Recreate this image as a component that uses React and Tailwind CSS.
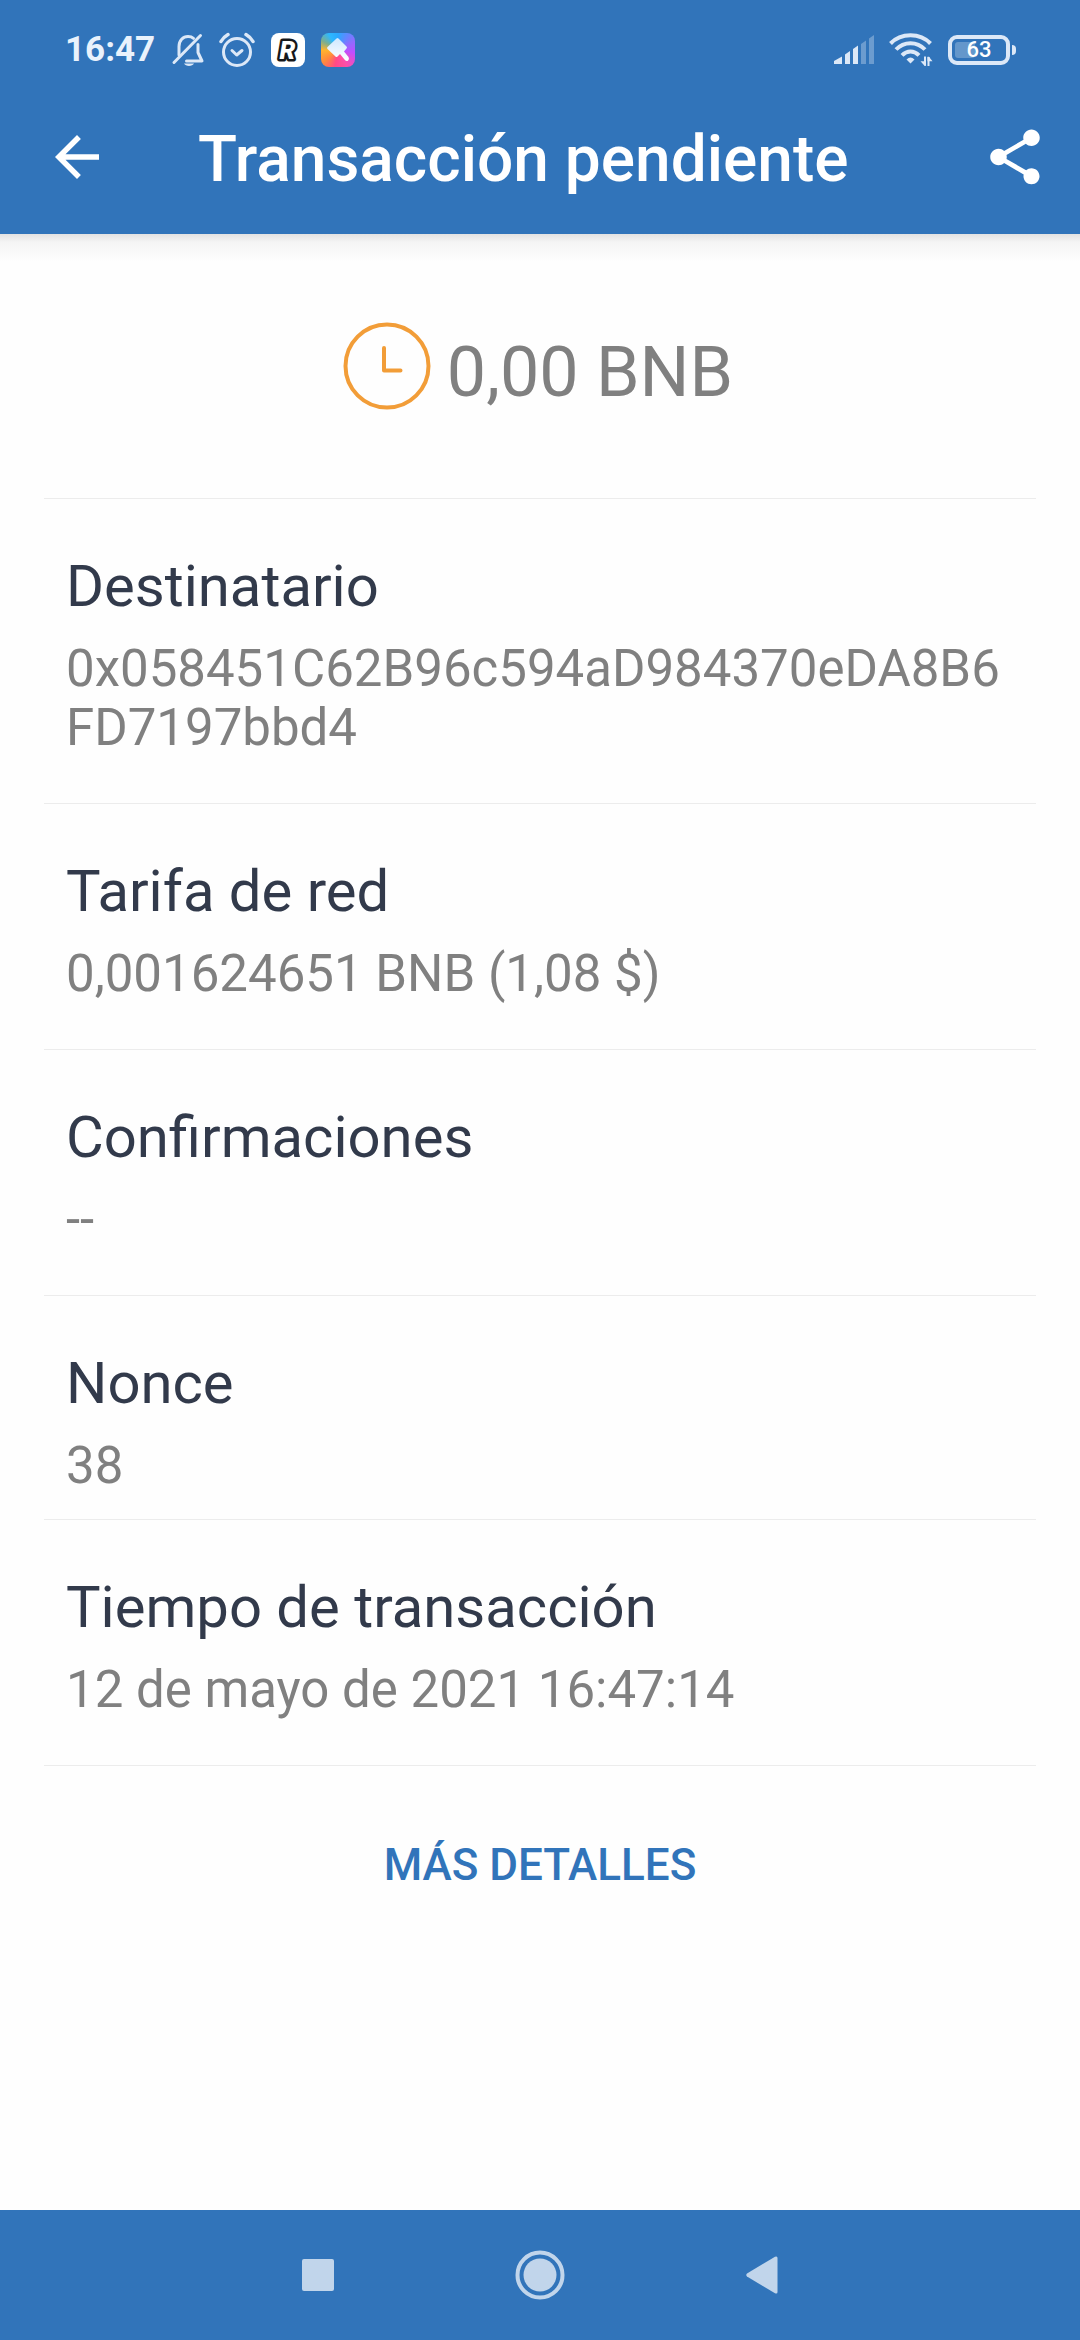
import React from 'react';

const details = [
  { label: 'Destinatario', value: '0x058451C62B96c594aD984370eDA8B6FD7197bbd4' },
  { label: 'Tarifa de red', value: '0,001624651 BNB (1,08 $)' },
  { label: 'Confirmaciones', value: '--' },
  { label: 'Nonce', value: '38', compact: true },
  { label: 'Tiempo de transacción', value: '12 de mayo de 2021 16:47:14' },
];

function BellOffIcon() {
  return (
    <svg className="h-9 w-9" viewBox="0 0 36 36" fill="none" stroke="currentColor" strokeWidth="3" strokeLinecap="round" strokeLinejoin="round">
      <path d="M8 23V14.500C8 8.500 12 4.500 17 4.500c2 0 4 .5 5.500 1.800" />
      <path d="M27 12.500v8l4 8.500H15.500" />
      <path d="M29.500 3.500L3 30.500" />
      <path d="M13 31.500h10c-1.500 3.300-8.500 3.300-10 0z" fill="currentColor" stroke="none" />
    </svg>
  );
}

function AlarmIcon() {
  return (
    <svg className="h-9 w-9" viewBox="0 0 36 36" fill="none" stroke="currentColor" strokeWidth="3" strokeLinecap="round" strokeLinejoin="round">
      <circle cx="18" cy="20" r="13.500" />
      <path d="M13 18.500l4.700 4.500 5.300-4.500" />
      <path d="M2 9.500c1.700-3 4-5.300 7-7M34 9.500c-1.700-3-4-5.300-7-7" strokeWidth="3.500" />
    </svg>
  );
}

function RevolutIcon() {
  return (
    <span className="flex h-[34px] w-[34px] rounded-lg bg-white">
      <svg className="h-full w-full" viewBox="0 0 34 34">
        <text x="16.500" y="26" textAnchor="middle" fontFamily="Roboto, sans-serif" fontSize="25" fontWeight="900" fontStyle="italic" fill="#fff" stroke="#15171a" strokeWidth="5" strokeLinejoin="round" paintOrder="stroke">R</text>
      </svg>
    </span>
  );
}

function BrushIcon() {
  return (
    <span className="flex h-[34px] w-[34px] rounded-lg bg-[conic-gradient(#2aa8ff,#8f6bff_60deg,#c04dff_100deg,#ff4fa8_150deg,#ff4a86_190deg,#ff8a3c_230deg,#ffb42e_270deg,#7fae8c_300deg,#2db8ff_330deg,#2aa8ff)]">
      <svg className="h-full w-full" viewBox="0 0 34 34">
        <defs>
          <linearGradient id="brush" x1="0" y1="0" x2="0" y2="1">
            <stop offset="0" stopColor="#cfe8ff" />
            <stop offset="1" stopColor="#fff" />
          </linearGradient>
        </defs>
        <path d="M15.500 5.500q1-1 2 0l8 8q1 1 0 2l-2.500 3 4.500 5.500q1.300 2.500-.5 3.700-1.800.8-3.300-1L19 21l-2.500 2.500q-1 1-2 0l-8-7.500q-1-1 0-2z" fill="url(#brush)" />
      </svg>
    </span>
  );
}

function SignalIcon() {
  return (
    <svg className="h-[30px] w-10" viewBox="0 0 40 30" fill="currentColor">
      <path d="M0 29v-3l8-4.500V29z" />
      <path d="M11 29V19.500l5-3.500v13z" />
      <path d="M19 29V14l5-3.500V29z" />
      <path d="M27 29V9l5-3.500V29z" opacity=".35" />
      <path d="M35 29V3.500L40 0v29z" opacity=".35" />
    </svg>
  );
}

function WifiIcon() {
  return (
    <svg className="h-[34px] w-11" viewBox="0 0 44 34" fill="none" stroke="currentColor" strokeWidth="4">
      <path d="M1.500 10.500C12-.5 31-.5 41.500 10.500" />
      <path d="M7 16.500c8-8.500 21-8.500 29 0" />
      <path d="M13 22.300c5-5.200 12-5.200 17 0" />
      <path d="M21.500 30.500l-4-4q4-4 8 0z" fill="currentColor" stroke="none" />
      <path d="M36 23.500v9M39.500 33v-9" strokeWidth="2" />
      <path d="M37 32.800h-1.500l-4-4.500H37zM38.500 23.700H40l3.500 4.500h-5z" fill="currentColor" stroke="none" />
    </svg>
  );
}

function Battery({ level }) {
  return (
    <div className="flex items-center gap-0.5" aria-label={`Batería ${level}%`}>
      <div className="relative flex h-[30px] w-[62px] items-center justify-center rounded-[9px] border-4 border-current">
        <span className="absolute inset-y-[3px] left-[3px] w-5 rounded-[3px] bg-white/25" />
        <span className="relative text-[22px] leading-[22px] font-medium text-white">{level}</span>
      </div>
      <span className="h-[10px] w-1 rounded-r bg-current" />
    </div>
  );
}

function StatusBar() {
  return (
    <div className="flex h-20 items-end justify-between pr-16 pb-3 pl-[65px] text-[#dce8f7]">
      <div className="flex items-center gap-4">
        <span className="text-[35px] leading-9 font-bold text-[#e9f2fc]">16:47</span>
        <BellOffIcon />
        <span className="-ml-1"><AlarmIcon /></span>
        <RevolutIcon />
        <BrushIcon />
      </div>
      <div className="flex h-9 items-center gap-[15px]">
        <SignalIcon />
        <WifiIcon />
        <Battery level={63} />
      </div>
    </div>
  );
}

function AppBar() {
  return (
    <header className="flex h-[154px] items-center justify-between pr-8 pl-11 text-white">
      <div className="flex items-center gap-[88px]">
        <button type="button" aria-label="Atrás">
          <svg className="h-[66px] w-[66px]" viewBox="0 0 24 24" fill="currentColor">
            <path d="M20 11H7.830l5.590-5.590L12 4l-8 8 8 8 1.410-1.410L7.830 13H20v-2z" />
          </svg>
        </button>
        <h1 className="pt-1.5 text-[64px] leading-[74px] font-medium">Transacción pendiente</h1>
      </div>
      <button type="button" aria-label="Compartir">
        <svg className="h-[66px] w-[66px]" viewBox="0 0 24 24" fill="currentColor">
          <path d="M18 16.080c-.76 0-1.440.3-1.960.77L8.910 12.700c.05-.23.09-.46.09-.7s-.04-.47-.09-.7l7.050-4.110c.54.5 1.250.81 2.040.81 1.660 0 3-1.340 3-3s-1.340-3-3-3-3 1.340-3 3c0 .24.04.47.09.7L8.040 9.810C7.500 9.310 6.790 9 6 9c-1.660 0-3 1.340-3 3s1.340 3 3 3c.79 0 1.500-.31 2.040-.81l7.120 4.160c-.05.21-.08.43-.08.65 0 1.610 1.310 2.920 2.920 2.920s2.920-1.310 2.920-2.920-1.310-2.920-2.920-2.920z" />
        </svg>
      </button>
    </header>
  );
}

function Amount() {
  return (
    <div className="flex items-start justify-center gap-4 pt-[88px] pr-1 pb-[84px]">
      <svg className="h-[88px] w-[88px]" viewBox="0 0 88 88" fill="none" stroke="#f29d38" strokeWidth="4" strokeLinecap="round" strokeLinejoin="round">
        <circle cx="44" cy="44" r="41.500" />
        <path d="M41 26v22.500h16.500" />
      </svg>
      <p className="pt-2 text-[70px] leading-[84px] text-[#808080]">0,00 BNB</p>
    </div>
  );
}

function Detail({ label, value, compact }) {
  return (
    <div className={compact ? 'border-b border-[#ececec] px-[22px] pt-[54px] pb-6' : 'border-b border-[#ececec] px-[22px] pt-[54px] pb-[46px]'}>
      <dt className="text-[58px] leading-[66px] text-[#323a4b]">{label}</dt>
      <dd className="mt-5 text-[51px] leading-[59px] break-all text-[#808080]">{value}</dd>
    </div>
  );
}

function NavBar() {
  return (
    <nav className="flex h-[130px] items-center justify-center gap-[122px] bg-[#3174ba] text-[#c1d5eb]">
      <button type="button" aria-label="Recientes" className="flex h-25 w-25 items-center justify-center">
        <span className="h-8 w-8 rounded-xs bg-current" />
      </button>
      <button type="button" aria-label="Inicio" className="flex h-25 w-25 items-center justify-center">
        <svg className="h-[50px] w-[50px]" viewBox="0 0 50 50" fill="none">
          <circle cx="25" cy="25" r="22.500" stroke="currentColor" strokeWidth="4" />
          <circle cx="25" cy="25" r="16.500" fill="currentColor" />
        </svg>
      </button>
      <button type="button" aria-label="Volver" className="flex h-25 w-25 items-center justify-center">
        <svg className="h-[38px] w-8" viewBox="0 0 32 38" fill="currentColor">
          <path d="M1 17.500Q-.5 19 1 20.500L29 37.300q2.500 1 2.500-1.300V2q0-2.300-2.500-1.300z" />
        </svg>
      </button>
    </nav>
  );
}

export default function App() {
  return (
    <div className="flex min-h-screen flex-col bg-[#fefefe] font-[Roboto,sans-serif]">
      <div className="bg-[#3174ba]">
        <StatusBar />
        <AppBar />
      </div>
      <main className="flex-1 bg-[linear-gradient(#e2e2e2,#f4f4f4_8px,#fefefe_28px)] px-11">
        <Amount />
        <dl className="border-t border-[#ececec]">
          {details.map((d) => (
            <Detail key={d.label} {...d} />
          ))}
        </dl>
        <div className="flex justify-center pt-[73px]">
          <button type="button" className="text-[44px] leading-[52px] font-medium text-[#3174ba]">MÁS DETALLES</button>
        </div>
      </main>
      <NavBar />
    </div>
  );
}
